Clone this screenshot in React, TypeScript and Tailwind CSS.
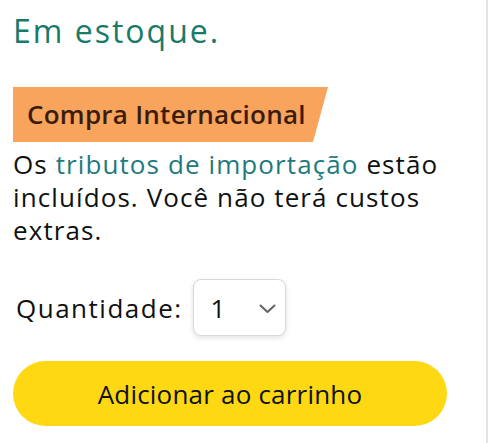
export default function App() {
  return (
    <div className="flex h-[443px] w-[500px] bg-white font-['Open_Sans',sans-serif] text-[#0f1111]">
      <div className="flex h-full w-[488px] flex-col border-r-2 border-[#e4e4e4] pl-[13px] pt-[13px]">
        <div className="text-[32px] leading-[36px] tracking-[2px] text-[#1a7a6a]">Em estoque.</div>

        {/* Import badge */}
        <div className="mt-[38px] w-[315px] bg-[#f8a45d] pb-[11px] pl-[14px] pt-[10px] text-[26px] leading-[34px] font-semibold tracking-[0.25px] text-[#3b1c0c] [clip-path:polygon(0_0,100%_0,calc(100%-15px)_100%,0_100%)]">
          Compra Internacional
        </div>

        <p className="mt-[6px] w-[460px] text-[26px] leading-[33px] tracking-[1.1px]">
          Os <span className="text-[#1f7a7c]">tributos de importação</span> estão incluídos. Você não terá custos extras.
        </p>

        <div className="mt-[32px] flex items-center gap-[10px] pl-[3px]">
          <span className="text-[26px] leading-[34px] tracking-[1.5px]">Quantidade:</span>
          <div className="flex h-[57px] w-[93px] items-center justify-between rounded-[8px] border border-[#d5d9d9] bg-white pl-[17px] pr-[9px] shadow-[0_2px_5px_rgba(15,17,17,0.12)]">
            <span className="text-[26px] leading-[34px]">1</span>
            <svg width="17" height="10" viewBox="0 0 17 10" fill="none" className="mt-[2px]">
              <polyline points="1.5,1.5 8.5,8 15.5,1.5" stroke="#5f6363" strokeWidth="2" strokeLinecap="round" strokeLinejoin="round" />
            </svg>
          </div>
        </div>

        <button className="mt-[25px] flex h-[65px] w-[434px] items-center justify-center rounded-full bg-[#ffd814] text-[26px] leading-[34px] tracking-[0.2px] text-[#0f1111]">
          Adicionar ao carrinho
        </button>
      </div>
    </div>
  )
}
